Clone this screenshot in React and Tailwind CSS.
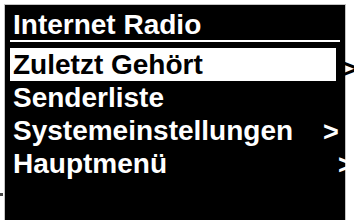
import React from "react";

const rows = [
  { label: "Zuletzt Gehört", active: true, chevron: "left-[337px] top-[5px] text-black" },
  { label: "Senderliste" },
  { label: "Systemeinstellungen", chevron: "left-[318px] top-[2px] text-white" },
  { label: "Hauptmenü", chevron: "left-[333px] top-[2px] text-white" },
];

export default function App() {
  return (
    <div
      className="relative w-[354px] h-[220px] bg-white overflow-hidden"
      style={{ fontFamily: '"Liberation Sans", Arial, sans-serif' }}
    >
      {/* small mark left of the display */}
      <span className="absolute left-0 top-[193px] w-[3px] h-[3px] bg-[#444]" />

      {/* Display */}
      <div className="ml-[4px] mt-[4px] w-[342px] h-[216px] border-x border-t border-[#c4c4c4] bg-black">
        <div className="pt-[5px] pl-[8px] text-white font-bold text-[28px] leading-[30px] whitespace-nowrap">
          Internet Radio
        </div>
        <div className="mx-[5px] h-[2px] bg-white" />

        <div className="mt-[6px]">
          {rows.map((row) => (
            <div key={row.label} className="relative h-[33px]">
              <div
                className={[
                  "h-[33px] font-bold text-[28px] leading-[33px] whitespace-nowrap",
                  row.active
                    ? "ml-[5px] w-[326px] bg-white text-black pl-[3px]"
                    : "pl-[8px] text-white",
                ].join(" ")}
              >
                {row.label}
              </div>
              {row.chevron && (
                <span
                  className={[
                    "absolute font-bold text-[27px] leading-[33px]",
                    row.chevron,
                  ].join(" ")}
                >
                  &gt;
                </span>
              )}
            </div>
          ))}
        </div>
      </div>
    </div>
  );
}
